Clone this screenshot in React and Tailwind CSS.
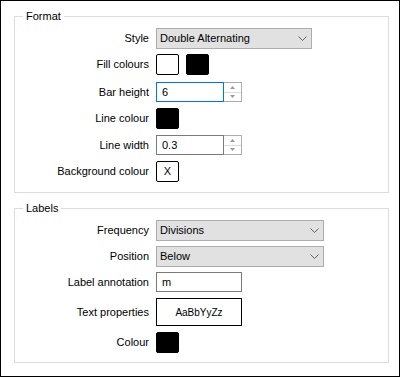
import React from "react";

const font = { fontFamily: "'Liberation Sans', Arial, sans-serif" };

function Chevron() {
  return (
    <svg width="9" height="5" viewBox="0 0 9 5" className="shrink-0">
      <path d="M0.5 0.5 L4.5 4.5 L8.5 0.5" fill="none" stroke="#606060" strokeWidth="1" />
    </svg>
  );
}

function Select({ value, width }) {
  return (
    <div className={`flex h-[21px] items-center justify-between border border-[#adadad] bg-[#e1e1e1] pl-[3px] pr-[4px] ${width}`}>
      <span>{value}</span>
      <Chevron />
    </div>
  );
}

function Spinner({ value, focused }) {
  return (
    <div className="flex h-[20px]">
      <div className={`flex w-[68px] items-center border pl-[5px] ${focused ? "border-[#0078d7]" : "border-[#7a7a7a]"}`}>
        {value}
      </div>
      <div className="flex w-[18px] flex-col border border-l-0 border-[#adadad]">
        <div className="flex flex-1 items-center justify-center border-b border-[#dcdcdc]">
          <svg width="5" height="3" viewBox="0 0 5 3"><path d="M2.5 0 L5 3 L0 3 Z" fill="#9a9a9a" /></svg>
        </div>
        <div className="flex flex-1 items-center justify-center">
          <svg width="5" height="3" viewBox="0 0 5 3"><path d="M0 0 L5 0 L2.5 3 Z" fill="#9a9a9a" /></svg>
        </div>
      </div>
    </div>
  );
}

function Swatch({ black, children }) {
  return (
    <div className={`flex h-[21px] w-[23px] items-center justify-center rounded-[2px] border border-black ${black ? "bg-black" : "bg-white"}`}>
      {children}
    </div>
  );
}

function Row({ label, children, className = "" }) {
  return (
    <div className={`flex items-center ${className}`}>
      <div className="w-[134px] text-right">{label}</div>
      <div className="ml-[7px] flex items-center gap-[7px]">{children}</div>
    </div>
  );
}

function Group({ title, className, children }) {
  return (
    <div className={`relative border border-[#dcdcdc] ${className}`}>
      <span className="absolute left-[8px] top-[-8px] bg-white px-[3px] leading-[14px]">{title}</span>
      {children}
    </div>
  );
}

export default function App() {
  return (
    <div className="h-[378px] w-[401px] bg-white">
      <div className="h-[377px] w-[400px] border border-black pl-[13px] pt-[15px] text-[11px] text-black" style={font}>
        <Group title="Format" className="h-[177px] w-[375px] pt-[11px]">
          <Row label="Style" className="h-[21px]">
            <Select value="Double Alternating" width="w-[156px]" />
          </Row>
          <Row label="Fill colours" className="mt-[5px] h-[21px]">
            <Swatch />
            <Swatch black />
          </Row>
          <Row label="Bar height" className="mt-[7px] h-[20px]">
            <Spinner value="6" focused />
          </Row>
          <Row label="Line colour" className="mt-[6px] h-[21px]">
            <Swatch black />
          </Row>
          <Row label="Line width" className="mt-[6px] h-[20px]">
            <Spinner value="0.3" />
          </Row>
          <Row label="Background colour" className="mt-[6px] h-[21px]">
            <Swatch>X</Swatch>
          </Row>
        </Group>

        <Group title="Labels" className="mt-[15px] h-[155px] w-[375px] pt-[11px]">
          <Row label="Frequency" className="h-[21px]">
            <Select value="Divisions" width="w-[168px]" />
          </Row>
          <Row label="Position" className="mt-[5px] h-[21px]">
            <Select value="Below" width="w-[168px]" />
          </Row>
          <Row label="Label annotation" className="mt-[5px] h-[20px]">
            <div className="flex h-[20px] w-[86px] items-center border border-[#7a7a7a] pl-[5px]">m</div>
          </Row>
          <Row label="Text properties" className="mt-[6px] h-[28px]">
            <div className="flex h-[28px] w-[86px] items-center justify-center border border-black text-[10px]">AaBbYyZz</div>
          </Row>
          <Row label="Colour" className="mt-[6px] h-[21px]">
            <Swatch black />
          </Row>
        </Group>
      </div>
    </div>
  );
}
